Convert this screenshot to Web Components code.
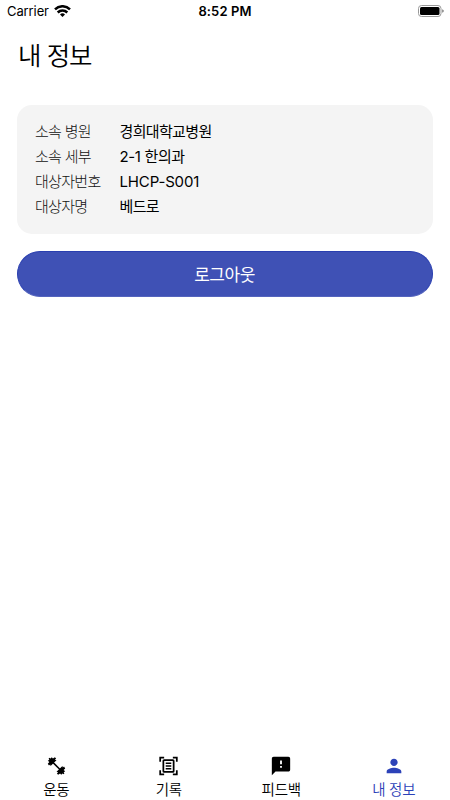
<!DOCTYPE html>
<html lang="ko">
<head>
<meta charset="utf-8">
<meta name="viewport" content="width=device-width, initial-scale=1">
<title>내 정보</title>
<style>
  body {
    margin: 0;
    background: #fff;
    color: #000;
    font-family: Inter, "Noto Sans CJK KR", sans-serif;
  }
</style>
</head>
<body>
<my-info-app></my-info-app>

<script>
class StatusBar extends HTMLElement {
  constructor() {
    super();
    this._shadowDom = this.attachShadow({mode: 'open'});
    this._shadowDom.innerHTML = `
      <style>
      :host {
        display: grid;
        grid-template-columns: 1fr auto 1fr;
        align-items: center;
        height: 23px;
        padding: 0 6px 0 7px;
        box-sizing: border-box;
        font-size: 13px;
        line-height: 23px;
      }
      .carrier {
        display: flex;
        align-items: center;
        gap: 5px;
        letter-spacing: -0.1px;
      }
      .time {
        margin-right: 1px;
        font-weight: 600;
        letter-spacing: 0.1px;
      }
      .battery {
        justify-self: end;
      }
      svg {
        display: block;
      }
      .wifi {
        margin-top: -2px;
      }
      </style>
      <div class="carrier">
        <span>Carrier</span>
        <svg class="wifi" width="17" height="12" viewBox="0 0 17 12" fill="none" stroke="#000" stroke-width="2.5">
          <path d="M1 4.300a10.700 10.700 0 0 1 15 0"/>
          <path d="M3.700 7.500a6.800 6.800 0 0 1 9.600 0"/>
          <path d="M8.500 11.900L6 9.500a3.600 3.600 0 0 1 5 0z" fill="#000" stroke="none"/>
        </svg>
      </div>
      <div class="time">8:52 PM</div>
      <svg class="battery" width="27" height="13" viewBox="0 0 27 13">
        <rect x="1.500" y=".5" width="22.500" height="11" rx="3" fill="none" stroke="#999"/>
        <rect x="3" y="2" width="19.500" height="8" rx="1.500"/>
        <path d="M25.300 4.300q1.400.5 1.400 1.700t-1.400 1.700z" fill="#666"/>
      </svg>`;
  }
}
customElements.define('status-bar', StatusBar);

class InfoRow extends HTMLElement {
  constructor() {
    super();
    this._shadowDom = this.attachShadow({mode: 'open'});
    this._shadowDom.innerHTML = `
      <style>
      :host {
        display: flex;
        height: 25px;
        line-height: 25px;
        font-size: 15px;
        white-space: nowrap;
      }
      .label {
        width: 84.5px;
        font-weight: 300;
        color: #111;
        letter-spacing: -0.7px;
      }
      .value {
        letter-spacing: var(--value-spacing, -0.65px);
      }
      </style>
      <span class="label">${this.getAttribute('label')}</span>
      <span class="value"><slot></slot></span>`;
  }
}
customElements.define('info-row', InfoRow);

class InfoCard extends HTMLElement {
  constructor() {
    super();
    this._shadowDom = this.attachShadow({mode: 'open'});
    this._shadowDom.innerHTML = `
      <style>
      :host {
        display: block;
        height: 129px;
        padding: 14px 18px;
        box-sizing: border-box;
        border-radius: 15px;
        background: #f4f4f4;
      }
      </style>
      <slot></slot>`;
  }
}
customElements.define('info-card', InfoCard);

class PillButton extends HTMLElement {
  constructor() {
    super();
    this._shadowDom = this.attachShadow({mode: 'open'});
    this._shadowDom.innerHTML = `
      <style>
      :host {
        display: block;
      }
      button {
        display: block;
        width: 100%;
        height: 46px;
        padding: 0 1px 2px 0;
        border: 1px solid #2a3fb0;
        border-bottom-color: #5464bd;
        border-radius: 23px;
        background: #3f51b5;
        color: #fff;
        font: inherit;
        font-size: 17px;
        letter-spacing: -0.5px;
      }
      </style>
      <button type="button"><slot></slot></button>`;
  }
}
customElements.define('pill-button', PillButton);

const icons = {
  workout: '<path d="M6 6l12 12" stroke="currentColor" stroke-width="2"/><path d="M1 9l2-2-2-1.500 2-1.500-1-1.200L3 1.500l1.500 1L6 1l1.500 1.500L10 .8l1.500 1.700L10 4.200l2 .5L4.500 12 4 10l-1.500 1.500zM23 15l-2 2 2 1.500-2 1.500 1 1.200-1 1.300-1.500-1L18 23l-1.500-1.500-2.500 1.700-1.500-1.700 1.500-1.700-2-.5L19.500 12l.5 2 1.500-1.500z"/>',
  record: '<path d="M1.500 6.500v-5h5M17.500 1.500h5v5M22.500 17.500v5h-5M6.500 22.500h-5v-5" fill="none" stroke="currentColor" stroke-width="2.200"/><rect x="5.500" y="4.500" width="13" height="15" rx="1" fill="none" stroke="currentColor" stroke-width="2.200"/><path d="M8.500 8.500h7M8.500 12h7M8.500 15.500h7" stroke="currentColor" stroke-width="2"/>',
  feedback: '<path d="M20 2H4c-1.100 0-1.990.9-1.990 2L2 22l4-4h14c1.100 0 2-.9 2-2V4c0-1.100-.9-2-2-2zm-7 12h-2v-2h2v2zm0-4h-2V6h2v4z"/>',
  person: '<path d="M12 12c2.210 0 4-1.790 4-4s-1.790-4-4-4-4 1.790-4 4 1.790 4 4 4zm0 2c-2.670 0-8 1.340-8 4v2h16v-2c0-2.660-5.330-4-8-4z"/>'
};

class TabItem extends HTMLElement {
  constructor() {
    super();
    this._shadowDom = this.attachShadow({mode: 'open'});
    this._shadowDom.innerHTML = `
      <style>
      :host {
        display: flex;
        flex: 1;
        flex-direction: column;
        align-items: center;
        color: #000;
      }
      :host([active]) {
        color: #2c42b8;
      }
      svg {
        display: block;
        width: var(--icon-size, 22px);
        height: 22px;
        fill: currentColor;
      }
      span {
        height: 21px;
        margin-top: 2px;
        line-height: 22px;
        font-size: 14.5px;
        font-weight: 350;
        letter-spacing: -0.25px;
        white-space: nowrap;
      }
      </style>
      <svg viewBox="0 0 24 24">${icons[this.getAttribute('icon')]}</svg>
      <span><slot></slot></span>`;
  }
}
customElements.define('tab-item', TabItem);

class MyInfoApp extends HTMLElement {
  constructor() {
    super();
    this._shadowDom = this.attachShadow({mode: 'open'});
    this._shadowDom.innerHTML = `
      <style>
      :host {
        display: flex;
        flex-direction: column;
        height: 800px;
        overflow: hidden;
      }
      main {
        flex: 1;
        padding: 0 17px;
      }
      h1 {
        height: 82px;
        margin: 0;
        padding: 13px 0 0 1px;
        box-sizing: border-box;
        font-size: 25.5px;
        font-weight: 350;
        line-height: 40px;
        letter-spacing: -1px;
      }
      .dept {
        --value-spacing: -0.35px;
      }
      .code {
        --value-spacing: -0.15px;
      }
      pill-button {
        margin-top: 17px;
      }
      nav {
        display: flex;
        height: 45px;
      }
      .workout {
        --icon-size: 19px;
      }
      .record {
        --icon-size: 19px;
      }
      </style>
      <status-bar></status-bar>
      <main>
        <h1>내 정보</h1>
        <info-card>
          <info-row label="소속 병원">경희대학교병원</info-row>
          <info-row label="소속 세부" class="dept">2-1 한의과</info-row>
          <info-row label="대상자번호" class="code">LHCP-S001</info-row>
          <info-row label="대상자명">베드로</info-row>
        </info-card>
        <pill-button>로그아웃</pill-button>
      </main>
      <nav>
        <tab-item icon="workout" class="workout">운동</tab-item>
        <tab-item icon="record" class="record">기록</tab-item>
        <tab-item icon="feedback">피드백</tab-item>
        <tab-item icon="person" active>내 정보</tab-item>
      </nav>`;
  }
}
customElements.define('my-info-app', MyInfoApp);
</script>
</body>
</html>
